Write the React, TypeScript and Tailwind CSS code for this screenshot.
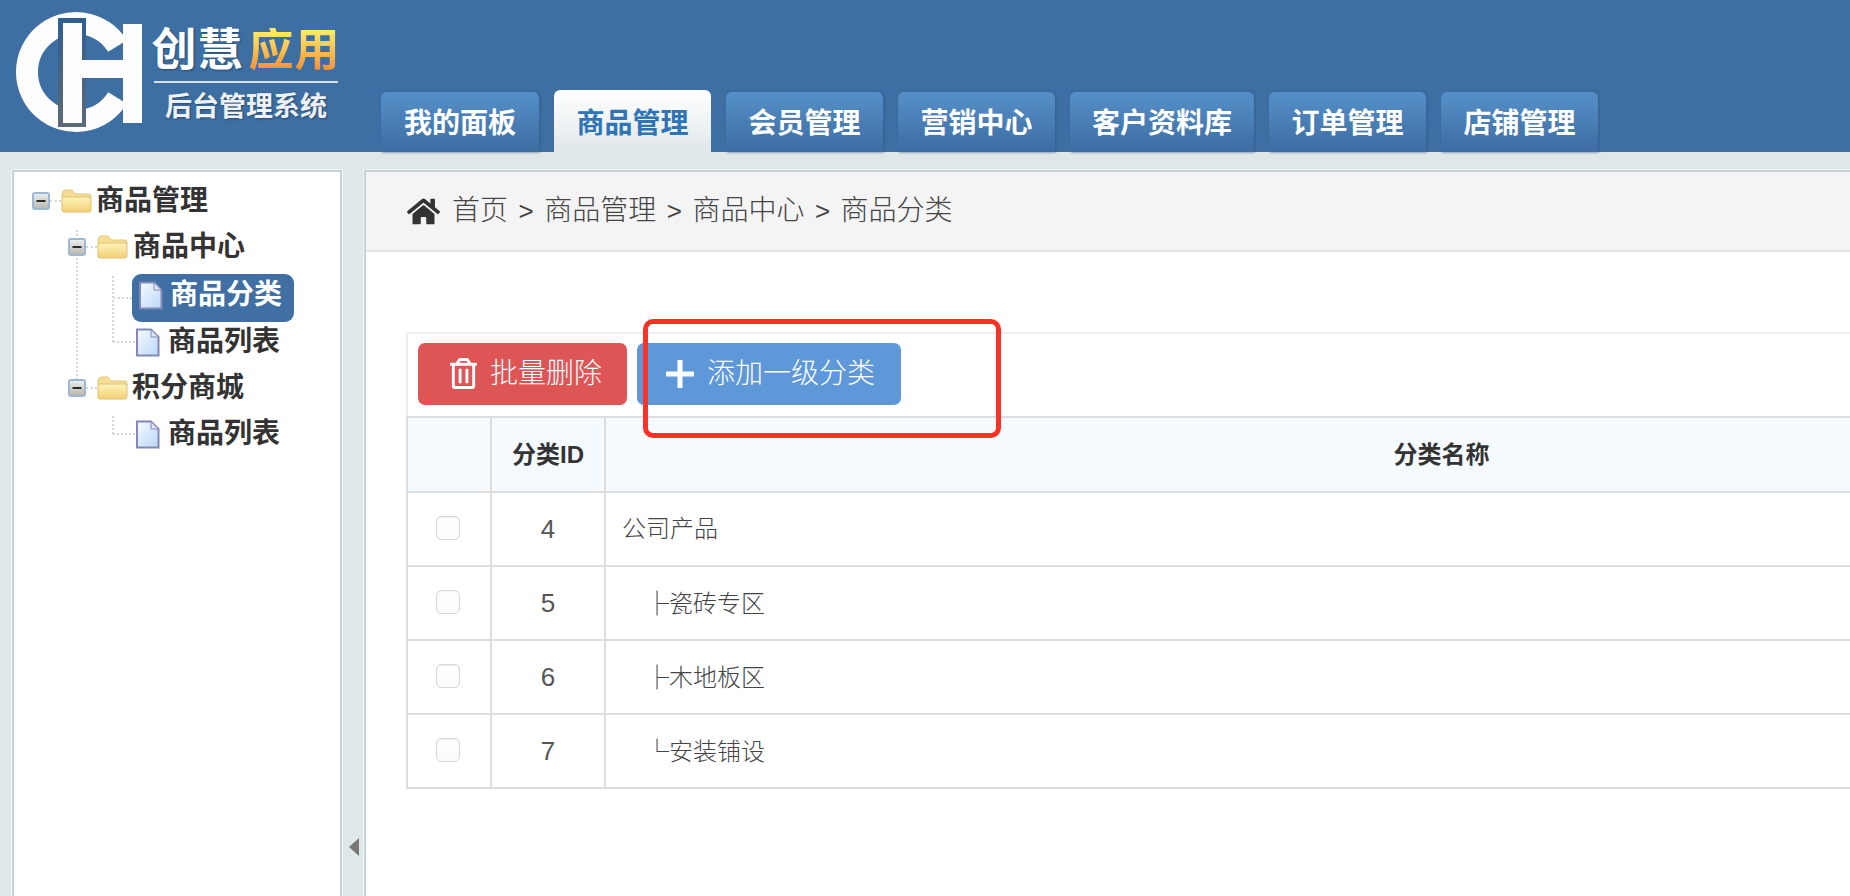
import { FaHome, FaRegTrashAlt } from "react-icons/fa";

const tabs = [
  { label: "我的面板", width: "w-[158px]" },
  { label: "商品管理", width: "w-[157px]", active: true },
  { label: "会员管理", width: "w-[157px]" },
  { label: "营销中心", width: "w-[157px]" },
  { label: "客户资料库", width: "w-[184px]" },
  { label: "订单管理", width: "w-[157px]" },
  { label: "店铺管理", width: "w-[157px]" },
];

const crumbs = ["首页", "商品管理", "商品中心", "商品分类"];

const rows = [
  { id: 4, name: "公司产品" },
  { id: 5, prefix: "├", name: "瓷砖专区" },
  { id: 6, prefix: "├", name: "木地板区" },
  { id: 7, prefix: "└", name: "安装铺设" },
];

function Logo() {
  return (
    <div className="flex w-[381px] shrink-0 items-start pl-[15px] pt-[11px]">
      <svg width="130" height="124" viewBox="15 11 130 124" className="shrink-0">
        <defs>
          <linearGradient id="logo-bar" x1="0" y1="0" x2="0" y2="1">
            <stop offset="0" stopColor="#2f5f92" />
            <stop offset="1" stopColor="#5c6a78" />
          </linearGradient>
        </defs>
        <path d="M117.5 46 A49 49 0 1 0 117.5 98" fill="none" stroke="#fdfdfd" strokeWidth="22" />
        <rect x="58" y="18" width="28" height="109" fill="url(#logo-bar)" />
        <rect x="63" y="23" width="19" height="100" fill="#fdfdfd" />
        <rect x="82" y="60" width="42" height="18" fill="#fdfdfd" />
        <rect x="123" y="24" width="19" height="99" fill="#fdfdfd" />
      </svg>
      <div className="ml-[9px] flex w-[184px] shrink-0 flex-col items-center pt-[13px]">
        <div className="flex h-[52px] items-center whitespace-nowrap text-[45px] leading-none font-bold tracking-[1px] text-white [text-shadow:1px_1px_2px_#274a70]">
          <span>创慧</span>
          <span className="ml-[5px] bg-gradient-to-b from-[#fff26a] to-[#f08a35] bg-clip-text text-transparent [text-shadow:none]">应用</span>
        </div>
        <div className="mt-[5px] h-[2px] w-full bg-[#d5e0ec]" />
        <div className="mt-[9px] whitespace-nowrap text-[27px] leading-[30px] font-bold text-[#eef2f6] [text-shadow:1px_1px_2px_#274a70]">后台管理系统</div>
      </div>
    </div>
  );
}

function Header() {
  return (
    <header className="flex h-[152px] shrink-0 bg-[#3d6fa3]">
      <Logo />
      <nav className="flex items-end gap-[15px]">
        {tabs.map((t) =>
          t.active ? (
            <div
              key={t.label}
              className={`${t.width} flex h-[62px] items-center justify-center rounded-t-[6px] bg-gradient-to-b from-white to-[#e0e7e9] pt-[6px] text-[28px] font-bold text-[#2f74b5]`}
            >
              {t.label}
            </div>
          ) : (
            <div
              key={t.label}
              className={`${t.width} flex h-[60px] items-center justify-center rounded-t-[6px] bg-gradient-to-b from-[#5690c9] to-[#3c6da1] pt-[4px] text-[28px] font-bold text-white shadow-[1px_0_3px_#345f8e]`}
            >
              {t.label}
            </div>
          ),
        )}
      </nav>
    </header>
  );
}

function MinusBox() {
  return (
    <svg width="18" height="18" viewBox="0 0 18 18" className="relative shrink-0">
      <defs>
        <linearGradient id="minus-fill" x1="0" y1="0" x2="0" y2="1">
          <stop offset="0" stopColor="#eef1f3" />
          <stop offset="1" stopColor="#b9b5ab" />
        </linearGradient>
      </defs>
      <rect x="1" y="1" width="16" height="16" rx="2" fill="url(#minus-fill)" stroke="#9db8d0" strokeWidth="2" />
      <rect x="4.5" y="8" width="9" height="2" fill="#2b2b2b" />
    </svg>
  );
}

function FolderIcon() {
  return (
    <svg width="31" height="24" viewBox="0 0 31 24" className="shrink-0">
      <defs>
        <linearGradient id="folder-fill" x1="0" y1="0" x2="0" y2="1">
          <stop offset="0" stopColor="#fff3bd" />
          <stop offset="1" stopColor="#f0cf73" />
        </linearGradient>
      </defs>
      <path d="M1 6 Q1 1 5 1 H11 L14 5 H28 Q30 5 30 7 V10 H1 Z" fill="#f5dd95" stroke="#e5c878" />
      <path d="M1 10 Q1 8 3 8 H28 Q30 8 30 10 V21 Q30 23 28 23 H3 Q1 23 1 21 Z" fill="url(#folder-fill)" stroke="#e3c26c" />
    </svg>
  );
}

function FileIcon() {
  return (
    <svg width="25" height="29" viewBox="0 0 25 29" className="shrink-0">
      <defs>
        <linearGradient id="file-fill" x1="0" y1="0" x2="1" y2="1">
          <stop offset="0" stopColor="#f8fbff" />
          <stop offset="1" stopColor="#b9d6f7" />
        </linearGradient>
      </defs>
      <path d="M2 1.5 H16 L23.5 9 V27.5 H2 Z" fill="url(#file-fill)" stroke="#8289b8" strokeWidth="2" />
      <path d="M16 1.5 V9 H23.5 Z" fill="#dfe6f5" stroke="#8289b8" />
    </svg>
  );
}

// dotted stub between the tree line and the icon
function Stub({ width }: { width: string }) {
  return <span className={`${width} shrink-0 border-t-2 border-dotted border-[#d6d6d6]`} />;
}

function Tree() {
  return (
    <aside className="relative w-[330px] shrink-0 border-2 border-b-0 border-[#c4d2da] bg-white pt-[6px] text-[28px] font-bold text-[#333] shadow-[0_0_0_1px_#f3f6f7]">
      {/* vertical guide lines */}
      <span className="absolute top-[58px] left-[62px] h-[150px] border-l-2 border-dotted border-[#d6d6d6]" />
      <span className="absolute top-[104px] left-[98px] h-[66px] border-l-2 border-dotted border-[#d6d6d6]" />
      <span className="absolute top-[244px] left-[98px] h-[18px] border-l-2 border-dotted border-[#d6d6d6]" />

      <div className="flex h-[46px] items-center pl-[18px]">
        <MinusBox />
        <Stub width="w-[11px]" />
        <FolderIcon />
        <span className="ml-[4px]">商品管理</span>
      </div>
      <div className="flex h-[46px] items-center pl-[54px]">
        <MinusBox />
        <Stub width="w-[11px]" />
        <FolderIcon />
        <span className="ml-[5px]">商品中心</span>
      </div>
      <div className="mt-[4px] flex h-[48px] items-center pl-[99px]">
        <Stub width="w-[19px]" />
        <div className="flex h-[48px] w-[162px] items-center rounded-[9px] bg-[#3f6fa3] pb-[6px] pl-[6px] text-white">
          <FileIcon />
          <span className="ml-[7px]">商品分类</span>
        </div>
      </div>
      <div className="flex h-[40px] items-center pl-[99px]">
        <Stub width="w-[22px]" />
        <FileIcon />
        <span className="ml-[8px]">商品列表</span>
      </div>
      <div className="mt-[3px] flex h-[46px] items-center pl-[54px]">
        <MinusBox />
        <Stub width="w-[11px]" />
        <FolderIcon />
        <span className="ml-[4px]">积分商城</span>
      </div>
      <div className="flex h-[46px] items-center pl-[99px]">
        <Stub width="w-[22px]" />
        <FileIcon />
        <span className="ml-[8px]">商品列表</span>
      </div>
    </aside>
  );
}

function Breadcrumb() {
  return (
    <div className="flex h-[80px] shrink-0 items-center border-b-2 border-[#e5e5e5] bg-[#f4f4f4] pl-[41px] text-[28px] font-light text-[#444]">
      <FaHome className="mr-[12px] text-[33px] text-[#333]" />
      {crumbs.map((c, i) => (
        <span key={c}>
          {i > 0 && <span className="mx-[10.5px] text-[26px]">&gt;</span>}
          {c}
        </span>
      ))}
    </div>
  );
}

function CategoryTable() {
  return (
    <div className="mt-[80px] ml-[40px] w-[1873px]">
      <div className="flex h-[84px] items-center gap-[10px] border-2 border-b-0 border-[#eeeeee] pl-[10px] pb-[3px] text-[28px] font-light text-white">
        <button className="flex h-[62px] w-[209px] items-center rounded-[7px] bg-[#dd5555] pl-[30px]">
          <FaRegTrashAlt size={31} />
          <span className="ml-[11px]">批量删除</span>
        </button>
        <button className="flex h-[62px] w-[264px] items-center rounded-[7px] bg-[#5e98d9] pl-[29px]">
          <svg width="28" height="28" viewBox="0 0 28 28" className="shrink-0">
            <rect x="11.5" y="0" width="5" height="28" fill="#fff" />
            <rect x="0" y="11.5" width="28" height="5" fill="#fff" />
          </svg>
          <span className="ml-[13px]">添加一级分类</span>
        </button>
      </div>
      <table className="w-full table-fixed border-collapse text-[24px] text-[#444]">
        <colgroup>
          <col className="w-[84px]" />
          <col className="w-[114px]" />
          <col />
        </colgroup>
        <thead>
          <tr className="h-[75px] bg-[#f5fafe] text-[#333]">
            <th className="border-2 border-[#dddddd]" />
            <th className="border-2 border-[#dddddd] font-bold">分类ID</th>
            <th className="border-2 border-[#dddddd] font-bold">分类名称</th>
          </tr>
        </thead>
        <tbody>
          {rows.map((r) => (
            <tr key={r.id} className="h-[74px]">
              <td className="border-2 border-[#dddddd]">
                <span className="mx-auto -mt-[2px] block h-[24px] w-[24px] -translate-x-px rounded-[5px] border border-[#d8d8d8] bg-gradient-to-b from-white to-[#fbfbfb] shadow-[inset_0_1px_2px_#eeeeee]" />
              </td>
              <td className="border-2 border-[#dddddd] text-center text-[26px] text-[#555]">{r.id}</td>
              <td className="border-2 border-[#dddddd] pl-[16px] font-light">
                {r.prefix && (
                  <span className="ml-[23px] font-['Noto_Sans_CJK_SC',sans-serif] font-light">{r.prefix}</span>
                )}
                {r.name}
              </td>
            </tr>
          ))}
        </tbody>
      </table>
    </div>
  );
}

export default function App() {
  return (
    <div className="relative flex h-[896px] w-full flex-col overflow-hidden bg-[#e0e7e9] font-['Liberation_Sans','Noto_Sans_CJK_SC',sans-serif]">
      <Header />
      <div className="flex min-h-0 flex-1 pt-[18px] pl-[12px]">
        <Tree />
        <div className="flex w-[22px] shrink-0 items-end justify-center pb-[40px] pl-[2px]">
          <span className="h-0 w-0 border-y-[9px] border-r-[10px] border-y-transparent border-r-[#777]" />
        </div>
        <main className="flex min-w-0 flex-1 flex-col overflow-hidden border-t-2 border-l-2 border-[#c4d2da] bg-white shadow-[0_0_0_1px_#f3f6f7]">
          <Breadcrumb />
          <CategoryTable />
        </main>
      </div>
      {/* red annotation drawn over the page */}
      <div className="absolute top-[319px] left-[643px] h-[119px] w-[358px] rounded-[10px] border-[5px] border-[#ff3024]" />
    </div>
  );
}
